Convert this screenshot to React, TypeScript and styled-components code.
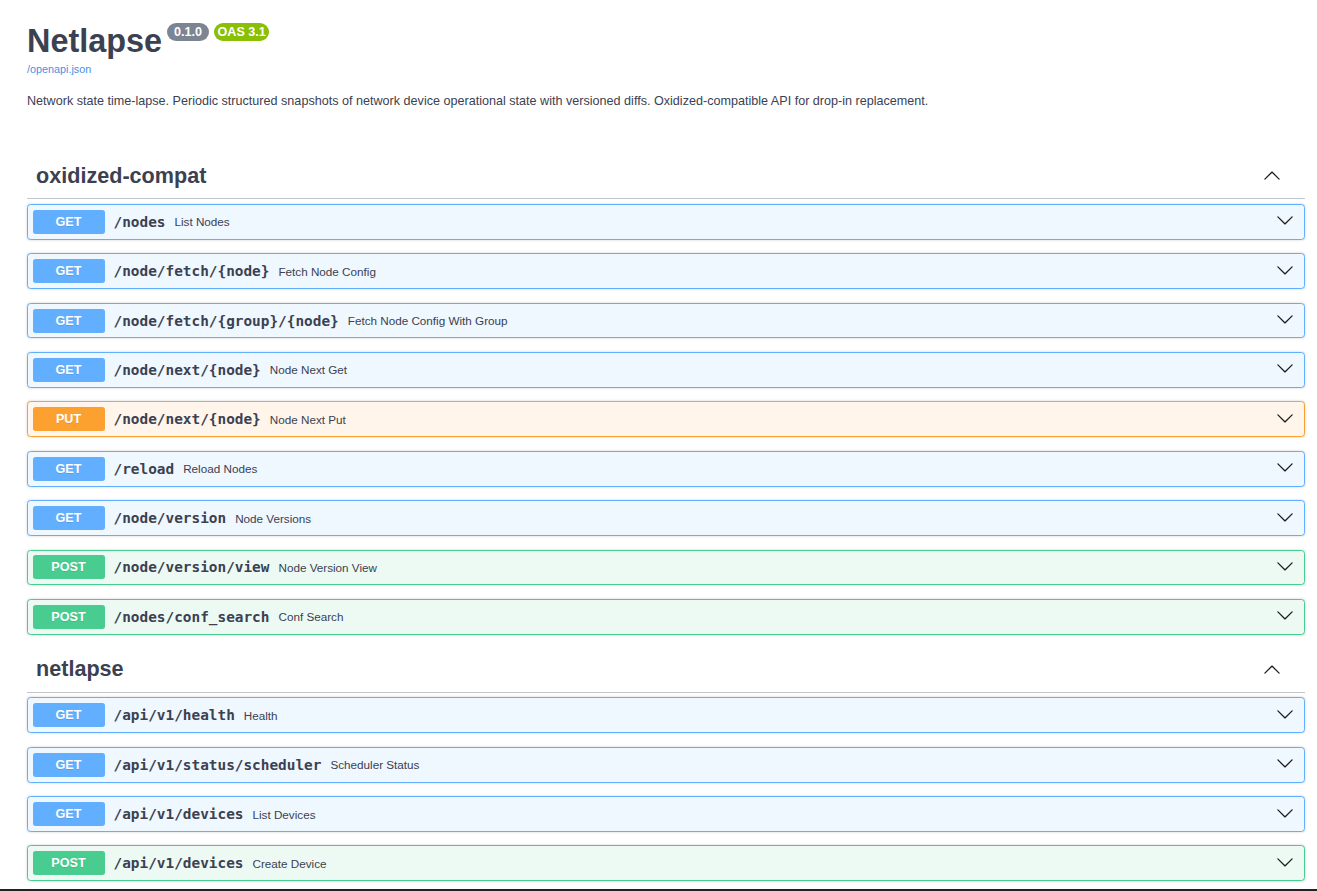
import React from 'react';
import styled, {createGlobalStyle} from 'styled-components';

type Method = 'GET' | 'PUT' | 'POST';

interface Operation {
  method: Method;
  path: string;
  summary: string;
}

interface Tag {
  name: string;
  operations: Operation[];
}

const METHOD_COLORS: Record<Method, {main: string; bg: string}> = {
  GET: {main: '#61affe', bg: '#eff7ff'},
  PUT: {main: '#fca130', bg: '#fff5ea'},
  POST: {main: '#49cc90', bg: '#edfaf4'},
};

const TAGS: Tag[] = [
  {
    name: 'oxidized-compat',
    operations: [
      {method: 'GET', path: '/nodes', summary: 'List Nodes'},
      {method: 'GET', path: '/node/fetch/{node}', summary: 'Fetch Node Config'},
      {method: 'GET', path: '/node/fetch/{group}/{node}', summary: 'Fetch Node Config With Group'},
      {method: 'GET', path: '/node/next/{node}', summary: 'Node Next Get'},
      {method: 'PUT', path: '/node/next/{node}', summary: 'Node Next Put'},
      {method: 'GET', path: '/reload', summary: 'Reload Nodes'},
      {method: 'GET', path: '/node/version', summary: 'Node Versions'},
      {method: 'POST', path: '/node/version/view', summary: 'Node Version View'},
      {method: 'POST', path: '/nodes/conf_search', summary: 'Conf Search'},
    ],
  },
  {
    name: 'netlapse',
    operations: [
      {method: 'GET', path: '/api/v1/health', summary: 'Health'},
      {method: 'GET', path: '/api/v1/status/scheduler', summary: 'Scheduler Status'},
      {method: 'GET', path: '/api/v1/devices', summary: 'List Devices'},
      {method: 'POST', path: '/api/v1/devices', summary: 'Create Device'},
    ],
  },
];

const Arrow = ({up}: {up?: boolean}) => (
  <ArrowSvg viewBox="0 0 20 20" width="18" height="18" $up={up}>
    <path d="M17.418 6.109c.272-.268.709-.268.979 0s.271.701 0 .969l-7.908 7.83c-.27.268-.707.268-.979 0l-7.908-7.83c-.27-.268-.27-.701 0-.969.271-.268.709-.268.979 0L10 13.25l7.418-7.141z" />
  </ArrowSvg>
);

const OperationRow = ({op}: {op: Operation}) => (
  <Opblock $method={op.method}>
    <MethodBadge $method={op.method}>{op.method}</MethodBadge>
    <Path>{op.path}</Path>
    <Description>{op.summary}</Description>
    <RowArrow>
      <Arrow />
    </RowArrow>
  </Opblock>
);

export default function App() {
  return <>
    <GlobalStyle />
    <Wrapper>
      <Info>
        <TitleRow>
          <Title>Netlapse</Title>
          <Stamp $bg="#7d8492" $padX={7}>0.1.0</Stamp>
          <Stamp $bg="#89bf04" $padX={3.5}>OAS 3.1</Stamp>
        </TitleRow>
        <BaseUrl href="#">/openapi.json</BaseUrl>
        <InfoText>
          Network state time-lapse. Periodic structured snapshots of network device operational state with versioned diffs. Oxidized-compatible API for drop-in replacement.
        </InfoText>
      </Info>
      {TAGS.map(tag => (
        <TagSection key={tag.name}>
          <TagHeader>
            <TagName>{tag.name}</TagName>
            <TagArrow>
              <Arrow up />
            </TagArrow>
          </TagHeader>
          {tag.operations.map(op => <OperationRow key={op.method + op.path} op={op} />)}
        </TagSection>
      ))}
    </Wrapper>
    <BottomEdge />
  </>;
}

const GlobalStyle = createGlobalStyle`
  html, body {
    margin: 0;
    background: #fff;
  }
  body {
    font-family: "Liberation Sans", Arial, sans-serif;
    color: #3b4151;
  }
  * {
    box-sizing: border-box;
  }
`;

const Wrapper = styled.div`
  padding: 0 12px 40px 27px;
`;

const Info = styled.div`
  padding-top: 22.8px;
  margin-bottom: 45px;
`;

const TitleRow = styled.div`
  display: flex;
  align-items: flex-start;
`;

const Title = styled.h2`
  margin: 0;
  font-size: 32.4px;
  line-height: 36px;
  font-weight: 700;
  color: #3b4151;
`;

const Stamp = styled.span<{$bg: string; $padX: number}>`
  margin: 0.5px 0 0 5px;
  padding: 2px ${p => p.$padX}px;
  background: ${p => p.$bg};
  border-radius: 57px;
  color: #fff;
  font-size: 12.6px;
  line-height: 14px;
  font-weight: 700;
`;

const BaseUrl = styled.a`
  display: block;
  margin-top: 4px;
  font-size: 10.8px;
  line-height: 13px;
  color: #4990e2;
  text-decoration: none;
`;

const InfoText = styled.p`
  margin: 16px 0 0;
  font-size: 12.6px;
  line-height: 18px;
  color: #3b4151;
`;

const TagSection = styled.div`
  & + & {
    margin-top: 1px;
  }
`;

const TagHeader = styled.div`
  display: flex;
  align-items: center;
  padding: 8px 18px 10px 9px;
  border-bottom: 1px solid rgba(59, 65, 81, 0.3);
  margin-bottom: 4.5px;
`;

const TagName = styled.h3`
  flex: 1;
  margin: 0;
  font-size: 21.6px;
  line-height: 25.5px;
  font-weight: 700;
  color: #3b4151;
`;

const TagArrow = styled.span`
  display: flex;
  margin: 1px 6px 0 0;
`;

const ArrowSvg = styled.svg<{$up?: boolean}>`
  fill: #1b1b1b;
  transform: ${p => (p.$up ? 'rotate(180deg)' : 'none')};
`;

const Opblock = styled.div<{$method: Method}>`
  display: flex;
  align-items: center;
  height: 35.9px;
  padding: 0 4.5px;
  margin-bottom: 13.5px;
  border: 1px solid ${p => METHOD_COLORS[p.$method].main};
  background: ${p => METHOD_COLORS[p.$method].bg};
  border-radius: 3.6px;
  box-shadow: 0 0 2.7px rgba(0, 0, 0, 0.19);
`;

const MethodBadge = styled.span<{$method: Method}>`
  min-width: 72px;
  height: 24px;
  display: flex;
  align-items: center;
  justify-content: center;
  background: ${p => METHOD_COLORS[p.$method].main};
  border-radius: 2.7px;
  color: #fff;
  font-size: 12.6px;
  font-weight: 700;
  text-shadow: 0 1px 0 rgba(0, 0, 0, 0.1);
`;

const Path = styled.span`
  padding: 0 9px;
  font-family: "DejaVu Sans Mono", monospace;
  font-size: 14.4px;
  font-weight: 700;
  color: #3b4151;
`;

const Description = styled.span`
  flex: 1;
  font-size: 11.7px;
  color: #3b4151;
`;

const RowArrow = styled.span`
  display: flex;
  margin: -3px 5.5px 0 0;
`;

const BottomEdge = styled.div`
  position: fixed;
  left: 0;
  right: 0;
  bottom: 0;
  height: 2.5px;
  background: #222;
`;
